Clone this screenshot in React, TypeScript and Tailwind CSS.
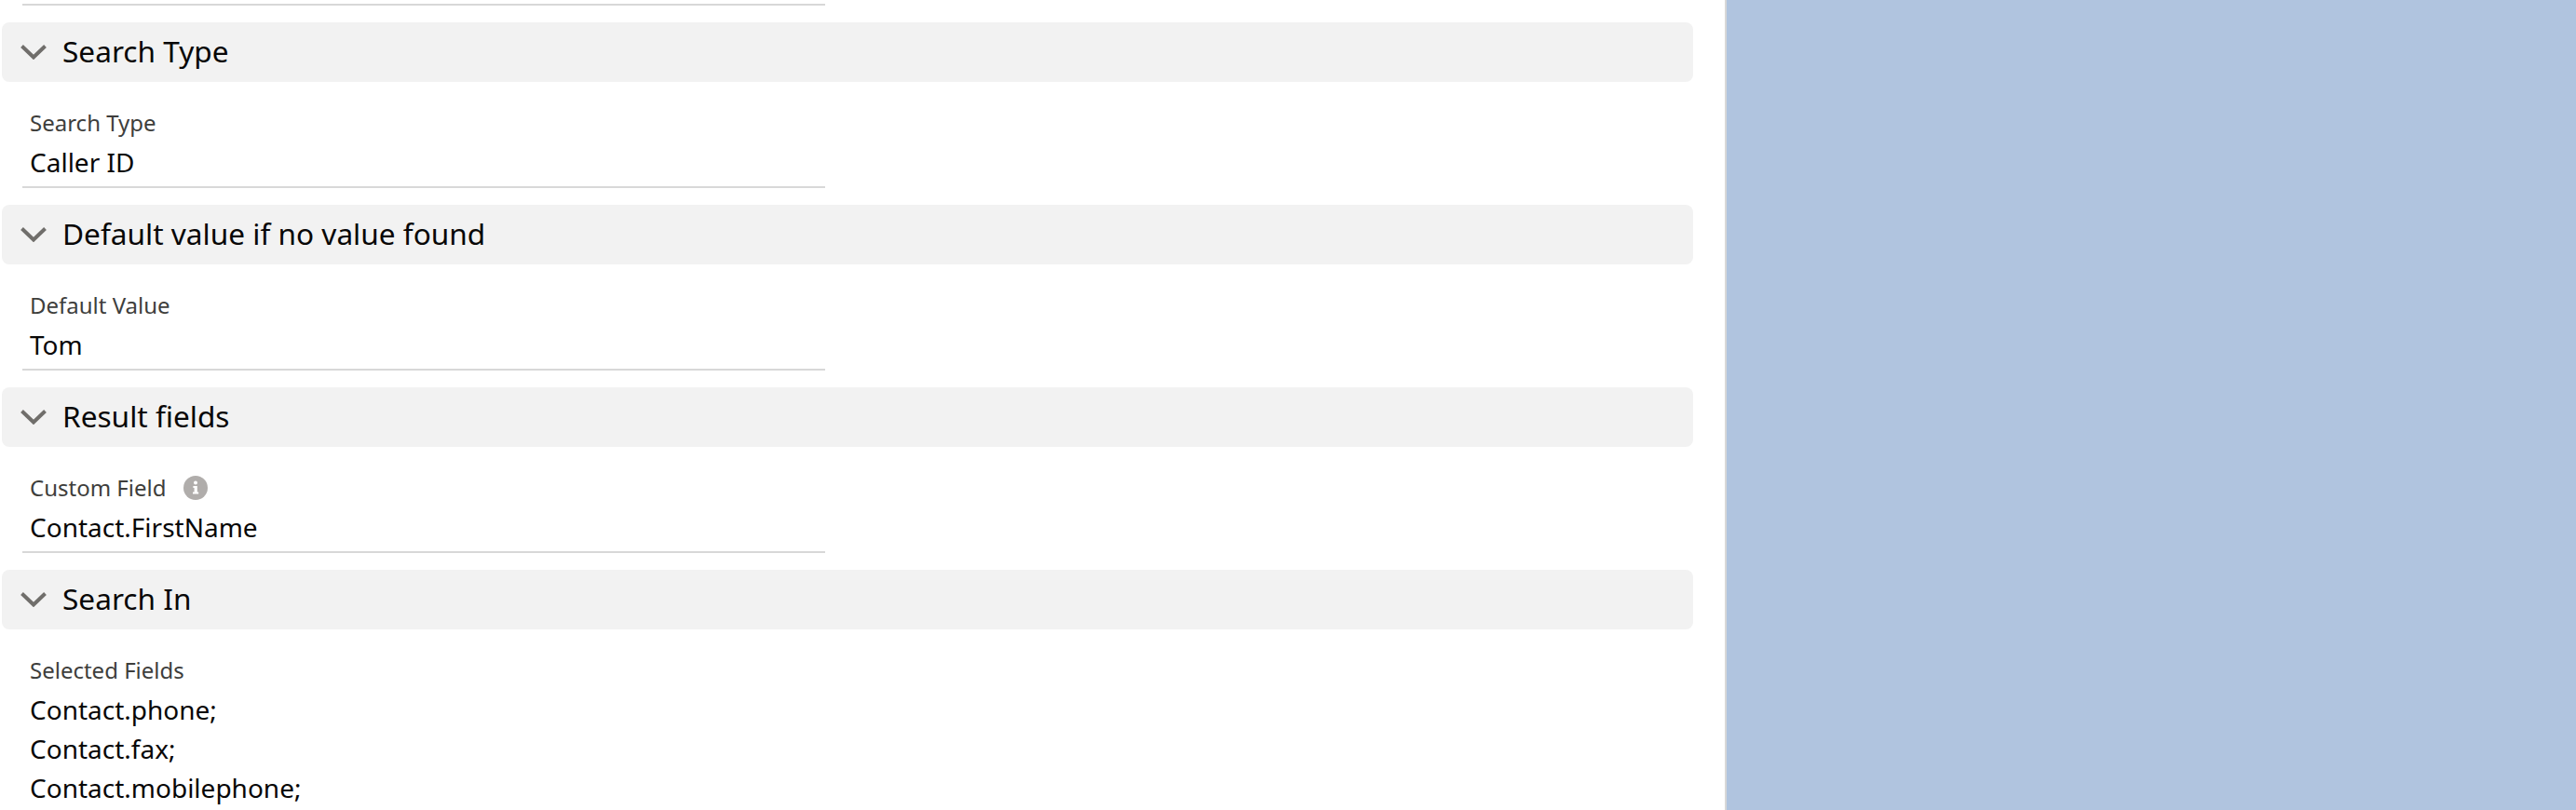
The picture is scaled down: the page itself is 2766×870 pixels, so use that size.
const font = "font-['Noto_Sans','Open_Sans',sans-serif]";

function Chevron() {
  return (
    <svg viewBox="0 0 28 16" className="ml-5 h-4 w-7 shrink-0" fill="none">
      <path d="M1.5 1.5 14 13.5 26.5 1.5" stroke="#706e6b" strokeWidth="4" />
    </svg>
  );
}

function InfoIcon() {
  return (
    <svg viewBox="0 0 26 26" className="ml-[18px] h-[26px] w-[26px]">
      <circle cx="13" cy="13" r="13" fill="#b0adab" />
      <circle cx="13" cy="7.6" r="2" fill="#fff" />
      <path d="M10.4 11h4.4v6.6h1.4v2H10v-2h1.6v-4.6h-1.2z" fill="#fff" />
    </svg>
  );
}

function SectionHeader({ title }: { title: string }) {
  return (
    <div className="ml-[2px] mr-[34px] flex h-16 items-center rounded-[8px] bg-[#f2f2f2]">
      <Chevron />
      <span className="ml-[17px] pb-[3px] text-[31.6px] leading-none text-[#080707]">{title}</span>
    </div>
  );
}

function Field({
  label,
  value,
  info,
}: {
  label: string;
  value: string;
  info?: boolean;
}) {
  return (
    <div className="mb-[18px] ml-6 w-[862px] border-b-2 border-[#d8d8d8] pt-[30px]">
      <div className="ml-2 flex h-7 items-center text-2xl leading-7 text-[#3e3e3c]">
        {label}
        {info && <InfoIcon />}
      </div>
      <div className="ml-2 mt-1 h-[50px] text-[28px] leading-[48px] text-[#080707]">{value}</div>
    </div>
  );
}

export default function App() {
  return (
    <div className={`flex h-[870px] w-full overflow-hidden bg-white ${font}`}>
      <div className="w-[1854px] shrink-0 border-r-2 border-[#d8d8d8]">
        <div className="mb-[18px] ml-6 h-[6px] w-[862px] border-b-2 border-[#d8d8d8]" />
        <SectionHeader title="Search Type" />
        <Field label="Search Type" value="Caller ID" />
        <SectionHeader title="Default value if no value found" />
        <Field label="Default Value" value="Tom" />
        <SectionHeader title="Result fields" />
        <Field label="Custom Field" value="Contact.FirstName" info />
        <SectionHeader title="Search In" />
        <div className="ml-8 pt-[30px]">
          <div className="flex h-7 items-center text-2xl leading-7 text-[#3e3e3c]">Selected Fields</div>
          <div className="mt-[7px] text-[28px] leading-[42px] text-[#080707]">
            <div>Contact.phone;</div>
            <div>Contact.fax;</div>
            <div>Contact.mobilephone;</div>
          </div>
        </div>
      </div>
      <div className="flex-1 bg-[#b0c4df]" />
    </div>
  );
}
